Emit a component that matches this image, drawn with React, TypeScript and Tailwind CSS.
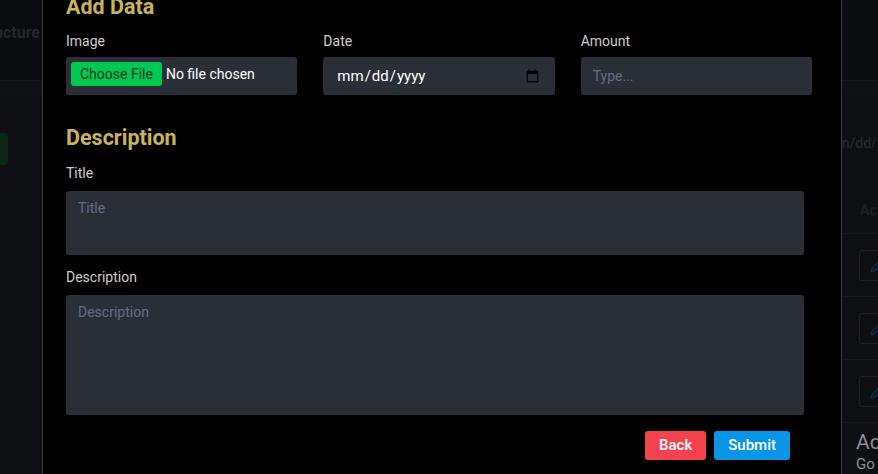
import { Pencil } from "lucide-react";

const rows = [0, 1, 2];

const App = () => {
  return (
    <div className="relative w-[878px] h-[474px] overflow-hidden bg-[#0d0f13] font-['Roboto',sans-serif]">
      {/* page behind the modal */}
      <header className="flex h-[81px] border-b border-[#17191d] bg-[#0b0c0f]">
        <div className="flex w-[42px] items-start justify-end overflow-hidden pt-[21px]">
          <span className="whitespace-nowrap pr-[2px] text-[16px] font-bold leading-6 text-[#25272b]">
            Infrastructure
          </span>
        </div>
      </header>
      <div className="h-[16px] bg-[#101115]" />
      <div className="flex">
        <div className="w-[42px]">
          <div className="mt-[36px] h-[32px] w-[8px] rounded-r-[3px] bg-[#0a2716]" />
        </div>
        <div className="ml-auto flex w-[36px] flex-col overflow-hidden">
          <div className="mt-[36px] -ml-[17px] whitespace-nowrap text-[14px] leading-5 text-[#2a2d33]">
            mm/dd/yyyy
          </div>
          <div className="mt-[47px] ml-[18px] whitespace-nowrap text-[14px] font-bold leading-5 text-[#1c1f23]">
            Action
          </div>
          <div className="mt-[13px] border-t border-[#16181c]">
            {rows.map((r) => (
              <div key={r} className="h-[63px] border-b border-[#16181c] pt-[16px] pl-[17px]">
                <div className="flex h-[31px] w-[40px] items-center rounded-[3px] border border-[#14222f] pl-[10px]">
                  <Pencil className="h-[14px] w-[14px] text-[#0e2c48]" strokeWidth={2.5} />
                </div>
              </div>
            ))}
          </div>
        </div>
      </div>

      {/* toast peeking in at the bottom right */}
      <div className="absolute left-[856px] top-[429px] whitespace-nowrap text-[#8b8f95]">
        <div className="text-[21px] leading-[26px]">Action</div>
        <div className="text-[15px] leading-[18px]">Go</div>
      </div>

      {/* modal */}
      <div className="absolute left-[42px] top-[-31px] w-[800px] h-[540px] border-x border-[#3b3b3b] bg-black px-[23px] pt-[24px]">
        <h2 className="text-[21.5px] font-bold leading-7 text-[#c9b35e]">Add Data</h2>

        <div className="mt-[10px] grid w-[746px] grid-cols-3 gap-x-[26px]">
          <div>
            <label className="block text-[14px] leading-5 text-[#d2cbcb]">Image</label>
            <input
              type="file"
              className="mt-[6px] h-[38px] w-full rounded-[3px] bg-[#2a2f37] pl-[5px] pt-[5px] text-[14px] text-white file:mr-[4px] file:h-[24px] file:rounded-[3px] file:border-0 file:bg-[#00c853] file:px-[9px] file:text-[14px] file:text-[#0a3a1c]"
            />
          </div>
          <div>
            <label className="block text-[14px] leading-5 text-[#d2cbcb]">Date</label>
            <input
              type="date"
              className="mt-[6px] h-[38px] w-full rounded-[3px] bg-[#2a2f37] px-[13px] text-[15px] text-white"
            />
          </div>
          <div>
            <label className="block text-[14px] leading-5 text-[#d2cbcb]">Amount</label>
            <input
              type="text"
              placeholder="Type..."
              className="mt-[6px] h-[38px] w-full rounded-[3px] bg-[#2a2f37] px-[12px] text-[14px] text-white placeholder:text-[#676b8a] outline-none"
            />
          </div>
        </div>

        <h2 className="mt-[29px] text-[21.5px] font-bold leading-7 text-[#c9b35e]">Description</h2>

        <label className="mt-[11px] block text-[14px] leading-5 text-[#d2cbcb]">Title</label>
        <textarea
          placeholder="Title"
          className="mt-[8px] block h-[64px] w-[738px] resize-none rounded-[3px] bg-[#2a2f37] px-[12px] pt-[7px] text-[14px] leading-5 text-white placeholder:text-[#676b8a] outline-none"
        />

        <label className="mt-[12px] block text-[14px] leading-5 text-[#d2cbcb]">Description</label>
        <textarea
          placeholder="Description"
          className="mt-[8px] block h-[120px] w-[738px] resize-none rounded-[3px] bg-[#2a2f37] px-[12px] pt-[7px] text-[14px] leading-5 text-white placeholder:text-[#676b8a] outline-none"
        />

        <div className="mt-[16px] flex w-[724px] justify-end gap-[8px]">
          <button className="h-[29px] rounded-[3px] bg-[#f2434f] px-[14px] text-[15px] font-medium text-white">
            Back
          </button>
          <button className="h-[29px] rounded-[3px] bg-[#0a95e6] px-[14px] text-[15px] font-medium text-white">
            Submit
          </button>
        </div>
      </div>
    </div>
  );
};

export default App;
